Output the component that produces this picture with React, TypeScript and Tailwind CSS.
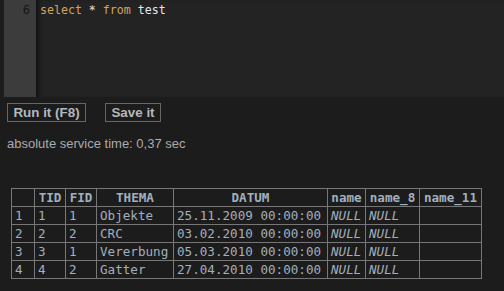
const rows = [
  ['1', '1', '1', 'Objekte', '25.11.2009 00:00:00'],
  ['2', '2', '2', 'CRC', '03.02.2010 00:00:00'],
  ['3', '3', '1', 'Vererbung', '05.03.2010 00:00:00'],
  ['4', '4', '2', 'Gatter', '27.04.2010 00:00:00'],
]

const mono = "font-['DejaVu_Sans_Mono',monospace]"
const cell = 'border border-[#777] h-[18px] px-[3px] py-0 leading-[16px] whitespace-nowrap overflow-hidden'

export default function App() {
  return (
    <div className="w-[504px] h-[291px] bg-[#1c1c1c] font-['Liberation_Sans',Arial,sans-serif] overflow-hidden">
      {/* Editor */}
      <div className="ml-[4px] h-[97px] flex bg-[#232323]">
        <div className={`w-[32px] bg-[#3c3c3c] text-right pr-[6px] pt-[3px] text-[12px] leading-[15px] text-[#161616] ${mono}`}>
          6
        </div>
        <div className={`flex-1 pl-[4px] pt-[3px] text-[11.6px] leading-[15px] shadow-[inset_5px_0_5px_-3px_rgba(0,0,0,0.6)] ${mono}`}>
          <span className="text-[#d4a45c]">select</span>
          <span className="text-[#e6e6e6]"> * </span>
          <span className="text-[#d4a45c]">from</span>
          <span className="text-[#e6e6e6]"> test</span>
        </div>
      </div>

      {/* Buttons */}
      <div className="flex gap-[19px] ml-[7px] mt-[6px]">
        <button className="h-[19px] w-[79px] border border-[#666] text-[13.4px] font-bold text-[#b4b8bc] leading-[17px]">
          Run it (F8)
        </button>
        <button className="h-[19px] w-[56px] border border-[#666] text-[13.4px] font-bold text-[#b4b8bc] leading-[17px]">
          Save it
        </button>
      </div>

      <p className="ml-[7px] mt-[14px] text-[13px] leading-[16px] text-[#ababab]">
        absolute service time: 0,37 sec
      </p>

      {/* Result table */}
      <table className={`ml-[11px] mt-[36px] w-[470px] border-collapse table-fixed text-[12.6px] text-[#a2b0be] ${mono}`}>
        <colgroup>
          <col className="w-[23px]" />
          <col className="w-[31px]" />
          <col className="w-[31px]" />
          <col className="w-[77px]" />
          <col className="w-[154px]" />
          <col className="w-[38px]" />
          <col className="w-[54px]" />
          <col className="w-[62px]" />
        </colgroup>
        <thead>
          <tr>
            <th className={cell}></th>
            <th className={`${cell} text-center font-bold`}>TID</th>
            <th className={`${cell} text-center font-bold`}>FID</th>
            <th className={`${cell} text-center font-bold`}>THEMA</th>
            <th className={`${cell} text-center font-bold`}>DATUM</th>
            <th className={`${cell} text-center font-bold`}>name</th>
            <th className={`${cell} text-center font-bold`}>name_8</th>
            <th className={`${cell} text-center font-bold`}>name_11</th>
          </tr>
        </thead>
        <tbody>
          {rows.map((r) => (
            <tr key={r[0]}>
              {r.map((v, i) => (
                <td key={i} className={`${cell} text-left`}>{v}</td>
              ))}
              <td className={`${cell} italic`}>NULL</td>
              <td className={`${cell} italic`}>NULL</td>
              <td className={cell}></td>
            </tr>
          ))}
        </tbody>
      </table>
    </div>
  )
}
